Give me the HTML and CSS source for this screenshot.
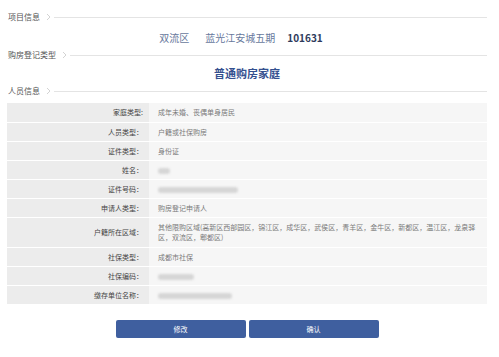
FILE: index.html
```html
<!DOCTYPE html>
<html lang="zh-CN">
<head>
<meta charset="utf-8">
<title>购房登记确认</title>
<link rel="stylesheet" href="styles.css">
</head>
<body>
<div class="page">
  <div class="section-head">
    <span class="section-title">项目信息</span>
    <svg class="chev" width="5" height="8" viewBox="0 0 5 8"><path d="M1 1 L4 4 L1 7" fill="none" stroke="#c8c8c8" stroke-width="0.8"/></svg>
    <span class="rule"></span>
  </div>
  <div class="info-row">
    <span class="info-item">双流区</span>
    <span class="info-item">蓝光江安城五期</span>
    <span class="info-code">101631</span>
  </div>
  <div class="section-head">
    <span class="section-title">购房登记类型</span>
    <svg class="chev" width="5" height="8" viewBox="0 0 5 8"><path d="M1 1 L4 4 L1 7" fill="none" stroke="#c8c8c8" stroke-width="0.8"/></svg>
    <span class="rule"></span>
  </div>
  <div class="type-row">普通购房家庭</div>
  <div class="section-head">
    <span class="section-title">人员信息</span>
    <svg class="chev" width="5" height="8" viewBox="0 0 5 8"><path d="M1 1 L4 4 L1 7" fill="none" stroke="#c8c8c8" stroke-width="0.8"/></svg>
    <span class="rule"></span>
  </div>

  <table class="info-table">
    <tr><th>家庭类型:</th><td>成年未婚、丧偶单身居民</td></tr>
    <tr><th>人员类型：</th><td>户籍或社保购房</td></tr>
    <tr><th>证件类型：</th><td>身份证</td></tr>
    <tr><th>姓名：</th><td><span class="blur blur-name"></span></td></tr>
    <tr><th>证件号码：</th><td><span class="blur blur-id"></span></td></tr>
    <tr><th>申请人类型：</th><td>购房登记申请人</td></tr>
    <tr class="tall"><th>户籍所在区域：</th><td class="wrap">其他限购区域(高新区西部园区，锦江区，成华区，武侯区，青羊区，金牛区，新都区，温江区，龙泉驿区，双流区，郫都区)</td></tr>
    <tr><th>社保类型：</th><td>成都市社保</td></tr>
    <tr><th>社保编码：</th><td><span class="blur blur-code"></span></td></tr>
    <tr><th>缴存单位名称：</th><td><span class="blur blur-unit"></span></td></tr>
  </table>

  <div class="actions">
    <button class="btn">修改</button>
    <button class="btn">确认</button>
  </div>
</div>
</body>
</html>
```
FILE: styles.css
```css
* { box-sizing: border-box; }
html, body { margin: 0; padding: 0; background: #ffffff; }
body { font-family: "Noto Sans CJK SC", "Noto Sans", sans-serif; }

.page {
  width: 480px;
  margin-left: 7px;
  padding-top: 10px;
}

.section-head {
  display: flex;
  align-items: center;
  height: 14px;
  padding-left: 1px;
}
.section-title {
  font-size: 8px;
  line-height: 14px;
  color: #555555;
}
.chev { margin: 0 3px 0 6px; flex: none; }
.rule {
  flex: 1;
  height: 1px;
  background: #e4e4e4;
}

.info-row {
  height: 24px;
  display: flex;
  align-items: center;
  justify-content: center;
  gap: 16px;
  padding-top: 2px;
  padding-right: 12px;
}
.info-item {
  font-size: 10px;
  color: #67789c;
}
.info-code {
  font-size: 10px;
  font-weight: bold;
  color: #2e3b5c;
  margin-left: -4px;
}

.type-row {
  height: 22px;
  line-height: 22px;
  text-align: center;
  font-size: 11px;
  font-weight: bold;
  color: #34508f;
}

.info-table {
  margin-top: 5px;
  width: 480px;
  border-collapse: collapse;
  table-layout: fixed;
  font-size: 7px;
}
.info-table tr { height: 19px; }
.info-table tr.tall { height: 30px; }
.info-table th {
  width: 142px;
  background: #ececec;
  color: #444444;
  font-weight: normal;
  text-align: right;
  padding: 0 6px 0 0;
  border-bottom: 1px solid #ffffff;
  vertical-align: middle;
}
.info-table td {
  background: #f6f6f6;
  color: #7a7a7a;
  text-align: left;
  padding: 0 5px 0 9px;
  border-bottom: 1px solid #ffffff;
  vertical-align: middle;
}
.info-table td.wrap { line-height: 10px; }

.blur {
  display: inline-block;
  height: 6px;
  background: #d6d6d6;
  border-radius: 3px;
  filter: blur(1.2px);
  vertical-align: middle;
}
.blur-name { width: 12px; }
.blur-id { width: 80px; }
.blur-code { width: 36px; }
.blur-unit { width: 74px; }

.actions {
  display: flex;
  justify-content: center;
  gap: 3px;
  margin-top: 15px;
}
.btn {
  width: 130px;
  height: 18px;
  border: none;
  border-radius: 2px;
  background: #3f5f9f;
  color: #ffffff;
  font-family: "Noto Sans CJK SC", sans-serif;
  font-size: 7px;
  padding: 0;
}
```
